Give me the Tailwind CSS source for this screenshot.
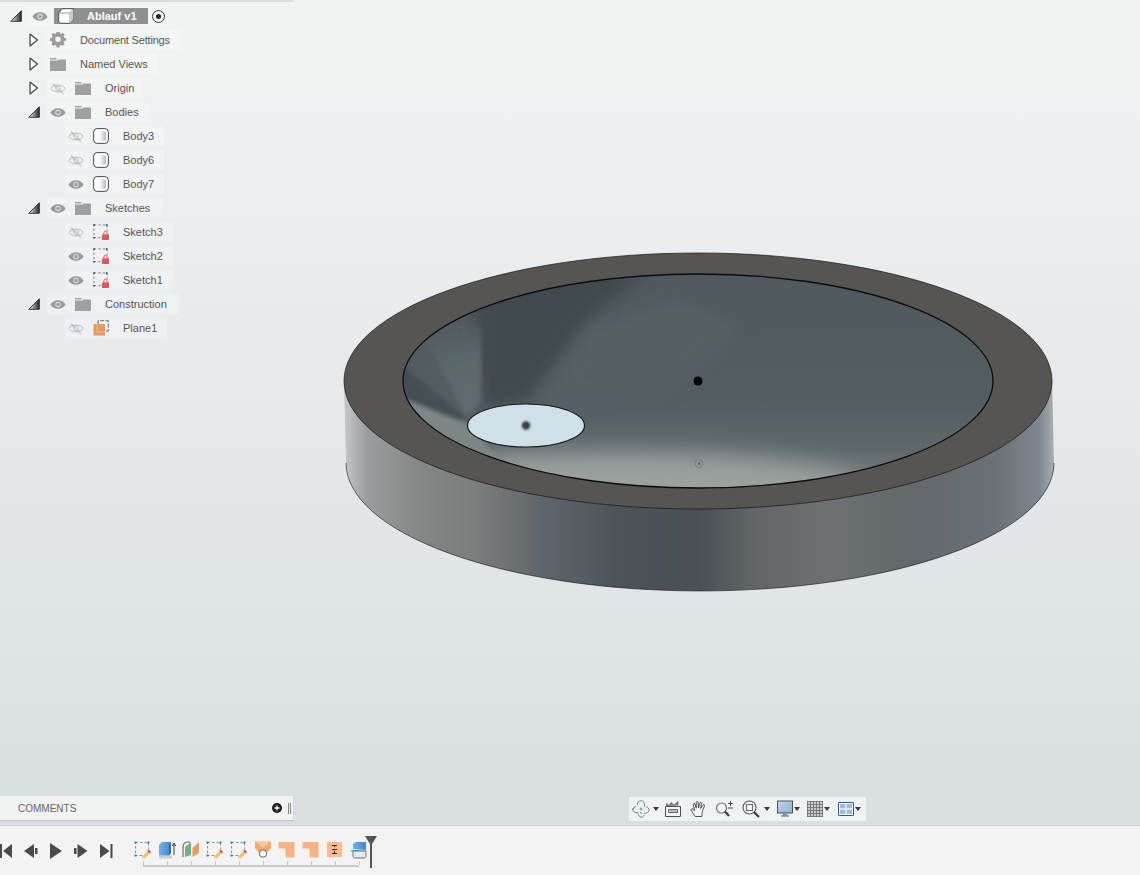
<!DOCTYPE html>
<html lang="de">
<head>
<meta charset="utf-8">
<title>Ablauf v1</title>
<script src="https://cdn.jsdelivr.net/npm/@tailwindcss/browser@4"></script>
</head>
<body class="overflow-hidden">
<svg class="absolute w-0 h-0" aria-hidden="true">
  <defs>
    <linearGradient id="tri" x1="0" y1="0" x2="1" y2="0"><stop offset="0" stop-color="#fff"/><stop offset="1" stop-color="#222"/></linearGradient>
    <linearGradient id="cyl" x1="0" y1="0" x2="1" y2="0"><stop offset="0" stop-color="#fff"/><stop offset=".45" stop-color="#f4f5f5"/><stop offset="1" stop-color="#b9bdc0"/></linearGradient>
    <linearGradient id="blue" x1="0" y1="0" x2="1" y2="0"><stop offset="0" stop-color="#6fb2e6"/><stop offset="1" stop-color="#3f87c9"/></linearGradient>
    <linearGradient id="screen" x1="0" y1="0" x2="1" y2="1"><stop offset="0" stop-color="#c3d6ea"/><stop offset="1" stop-color="#8fb0d4"/></linearGradient>
    <symbol id="eye" viewBox="0 0 18 12"><path d="M.5 6C4 -.5 14 -.5 17.500 6C14 12.500 4 12.500 .5 6Z" fill="#9b9b9b"/><circle cx="9" cy="6" r="3.100" fill="#dcdedf"/><circle cx="9" cy="6" r="1.900" fill="#9b9b9b"/></symbol>
    <symbol id="eyeoff" viewBox="0 0 18 14"><path d="M.8 7C4 1.800 14 1.800 17.200 7C14 12.200 4 12.200 .8 7Z" fill="none" stroke="#b0b0b0" stroke-width=".9"/><circle cx="9" cy="7" r="2.800" fill="none" stroke="#bbb" stroke-width=".9"/><path d="M3.500 1L15.500 12.500M2.500 2L14.500 13.500" stroke="#acacac" stroke-width=".8"/></symbol>
    <symbol id="folder" viewBox="0 0 16 13"><path d="M0 0H6.500V1.500H0Z" fill="#a5a5a5"/><path d="M0 2.500H7.500L8.500 1.500H16V13H0Z" fill="#a0a0a0"/></symbol>
    <symbol id="open" viewBox="0 0 12 12"><path d="M.8 11.300L11.300 .8V11.300Z" fill="url(#tri)" stroke="#333" stroke-width="1"/></symbol>
    <symbol id="shut" viewBox="0 0 10 14"><path d="M1 1L8.500 7L1 13Z" fill="#fafafa" stroke="#444" stroke-width="1.200" stroke-linejoin="round"/></symbol>
    <symbol id="body" viewBox="0 0 16 16"><rect x=".6" y=".6" width="14.800" height="14.800" rx="3.500" fill="#fff" stroke="#3e4a5b" stroke-width="1"/><path d="M3 4C5 2.500 11 2.500 13 4V12C11 13.500 5 13.500 3 12Z" fill="url(#cyl)"/></symbol>
    <symbol id="sketchlock" viewBox="0 0 17 17"><path d="M1 1H15V8M8 14.500H1V1" fill="none" stroke="#555" stroke-width=".8" stroke-dasharray="2.500 2.200"/><path d="M.3 .3h1.700v1.700h-1.700zM13.700 .3h1.700v1.700h-1.700zM.3 13.700h1.700v1.700h-1.700z" fill="#3a4a5c"/><rect x="9.500" y="11" width="7.500" height="6" fill="#de5660"/><path d="M11.500 11V9.500a1.700 1.700 0 0 1 3.500 0V11" fill="none" stroke="#de5660" stroke-width="1"/></symbol>
    <symbol id="pencilsketch" viewBox="0 0 18 18"><path d="M1.500 1.500H14.500V8M8 14.500H1.500V1.500" fill="none" stroke="#6b7a88" stroke-width=".8" stroke-dasharray="2.500 2"/><path d="M.5 .5h2v2h-2zM13.500 .5h2v2h-2zM.5 13.500h2v2h-2z" fill="#2f7cc4"/><path d="M8.500 15L14.500 8.500L17 11L11 17.200L8 17.500Z" fill="#f4c07a"/><path d="M14.500 8.500L17 11L15.800 12.300L13.300 9.800Z" fill="#d9434f"/></symbol>
    <symbol id="fillet" viewBox="0 0 18 18"><path d="M.5 1H16.500V16.500H9.500C8 16.500 7.500 15.500 7.500 14V9C7.500 8 7 7.500 6 7.500H.5Z" fill="#f9b382"/></symbol>
    <symbol id="caret" viewBox="0 0 6 4"><path d="M0 0H6L3 4Z" fill="#3a3a3a"/></symbol>
  </defs>
</svg>

<div class="relative w-[1140px] h-[875px] flex flex-col font-['Liberation_Sans',Arial,sans-serif] text-[#555]">
  <!-- Canvas -->
  <main class="relative flex-1 bg-linear-to-b from-[#f1f3f3] via-[#e6e9eb] to-[#d9dfe0]">
    <svg class="absolute top-0 left-0" width="1140" height="826" viewBox="0 0 1140 826" aria-label="3D-Modell">
      <defs>
        <linearGradient id="side" gradientUnits="userSpaceOnUse" x1="345" y1="0" x2="1054" y2="0">
          <stop offset="0" stop-color="#c2c7c7"/>
          <stop offset=".03" stop-color="#9b9e9e"/>
          <stop offset=".1" stop-color="#868888"/>
          <stop offset=".19" stop-color="#7a7c7c"/>
          <stop offset=".28" stop-color="#5e656a"/>
          <stop offset=".39" stop-color="#4b5359"/>
          <stop offset=".5" stop-color="#4a5053"/>
          <stop offset=".58" stop-color="#626669"/>
          <stop offset=".68" stop-color="#6d7173"/>
          <stop offset=".8" stop-color="#62676a"/>
          <stop offset=".92" stop-color="#6a7277"/>
          <stop offset=".98" stop-color="#7f888e"/>
          <stop offset="1" stop-color="#a9afb2"/>
        </linearGradient>
        <linearGradient id="bowl" gradientUnits="userSpaceOnUse" x1="0" y1="274" x2="0" y2="488">
          <stop offset="0" stop-color="#4f5a5e"/>
          <stop offset=".6" stop-color="#525e62"/>
          <stop offset=".82" stop-color="#5f696b"/>
          <stop offset="1" stop-color="#7a8382"/>
        </linearGradient>
        <linearGradient id="wedge" gradientUnits="userSpaceOnUse" x1="440" y1="330" x2="465" y2="400">
          <stop offset="0" stop-color="#5b676b" stop-opacity="0"/>
          <stop offset=".45" stop-color="#5a666a"/>
          <stop offset="1" stop-color="#5f6b6e"/>
        </linearGradient>
        <clipPath id="bowlclip"><ellipse cx="698" cy="381" rx="295" ry="107"/></clipPath>
        <filter id="b2" x="-30%" y="-30%" width="160%" height="160%"><feGaussianBlur stdDeviation="2.200"/></filter>
        <filter id="b6" x="-30%" y="-30%" width="160%" height="160%"><feGaussianBlur stdDeviation="8"/></filter>
        <filter id="b16" x="-30%" y="-60%" width="160%" height="220%"><feGaussianBlur stdDeviation="12"/></filter>
        <filter id="b1" x="-50%" y="-50%" width="200%" height="200%"><feGaussianBlur stdDeviation=".8"/></filter>
      </defs>
      <path d="M344 381L346 463A354 128 0 0 0 1054 463L1052 381Z" fill="url(#side)"/>
      <path d="M346 463A354 128 0 0 0 1054 463" fill="none" stroke="#111" stroke-width=".6"/>
      <ellipse cx="698" cy="381" rx="354" ry="128" fill="#565553" stroke="#151515" stroke-width=".7"/>
      <ellipse cx="698" cy="381" rx="295" ry="107" fill="url(#bowl)"/>
      <g clip-path="url(#bowlclip)">
        <ellipse cx="620" cy="486" rx="240" ry="34" fill="#9aa19e" filter="url(#b16)"/>
        <path d="M585 322L650 268H470L482 408L525 402Z" fill="#3f494d" filter="url(#b6)"/>
        <path d="M590 330L680 300L740 330L670 390L540 405Z" fill="#566063" filter="url(#b6)"/>
        <path d="M466 415L420 330L481 320L481 402Z" fill="url(#wedge)" filter="url(#b2)"/>
        <path d="M466 418L398 362V395L445 428Z" fill="#454f53" filter="url(#b2)"/>
        <path d="M470 425L403 398L405 445L505 470Z" fill="#7c8888" filter="url(#b2)"/>
      </g>
      <ellipse cx="698" cy="381" rx="295" ry="107" fill="none" stroke="#0c0c0c" stroke-width="1.300"/>
      <ellipse cx="526" cy="425.500" rx="58.500" ry="21.500" fill="#cfe0e9" stroke="#15191b" stroke-width="1.200"/>
      <circle cx="526" cy="425.500" r="4.200" fill="#3a3a3a" filter="url(#b1)"/>
      <circle cx="698" cy="381" r="4.500" fill="#050505"/>
      <circle cx="699" cy="463.500" r="4" fill="none" stroke="#70728e" stroke-width=".8"/>
      <circle cx="699" cy="463.500" r="1.200" fill="#5d5f7c"/>
    </svg>

    <!-- Browser tree -->
    <nav class="absolute top-0 left-0 w-[293px] border-t-2 border-[#d9dcdd] pt-[2px] text-[11px]">
      <div class="flex items-center h-6 pl-[10px]">
        <svg class="w-3 h-3" ><use href="#open"/></svg>
        <div class="flex items-center h-5 ml-[7px] pr-[3px] bg-white/25">
          <span class="w-[22px] flex justify-center"><svg class="w-4 h-[11px]"><use href="#eye"/></svg></span>
          <span class="flex items-center w-[94px] h-4 ml-[3px] bg-[#8f8f8f] pl-[4px]">
            <svg class="w-4 h-4" viewBox="0 0 16 16"><path d="M.7 5L4 .7H15.300V11L12 15.300H3A2.300 2.300 0 0 1 .7 13Z" fill="#fff" stroke="#444" stroke-width=".9"/><path d="M.7 5H12V15.300M12 5L15.300 .7" fill="none" stroke="#777" stroke-width=".7"/><path d="M12 5L15.300 .7V11L12 15.300Z" fill="#c9cbcd"/></svg>
            <span class="ml-[13px] font-bold text-white">Ablauf v1</span>
          </span>
          <span class="ml-[4px] w-[13px] h-[13px] rounded-full border border-[#333] flex items-center justify-center"><span class="w-[5px] h-[5px] rounded-full bg-[#222]"></span></span>
        </div>
      </div>

      <div class="flex items-center h-6 pl-[29px]">
        <svg class="w-[10px] h-[14px]"><use href="#shut"/></svg>
        <div class="flex items-center h-5 ml-[8px] pr-[10px] bg-white/25">
          <span class="w-[22px] flex justify-center"><svg class="w-4 h-4" viewBox="0 0 16 16"><path fill="#9b9b9b" fill-rule="evenodd" d="M6.500 0h3l.4 2.100 1.300.6L13 1.500l2.100 2.100-1.200 1.800.6 1.300 2.100.4v3l-2.100.4-.6 1.300 1.200 1.800-2.100 2.100-1.800-1.200-1.300.6-.4 2.100h-3l-.4-2.100-1.300-.6L3 15.800.9 13.700l1.200-1.800-.6-1.300L-.6 10.200v-3l2.100-.4.6-1.300L.9 3.600 3 1.500l1.800 1.200 1.300-.6ZM8 5.400a3 3 0 1 0 0 6 3 3 0 0 0 0-6Z" transform="translate(.6 -.6) scale(.93)"/></svg></span>
          <span class="ml-[11px] tracking-[-0.18px]">Document Settings</span>
        </div>
      </div>

      <div class="flex items-center h-6 pl-[29px]">
        <svg class="w-[10px] h-[14px]"><use href="#shut"/></svg>
        <div class="flex items-center h-5 ml-[8px] pr-[9px] bg-white/25">
          <span class="w-[22px] flex justify-center"><svg class="w-4 h-[13px]"><use href="#folder"/></svg></span>
          <span class="ml-[11px]">Named Views</span>
        </div>
      </div>

      <div class="flex items-center h-6 pl-[29px]">
        <svg class="w-[10px] h-[14px]"><use href="#shut"/></svg>
        <div class="flex items-center h-5 ml-[8px] pr-[9px] bg-white/25">
          <span class="w-[22px] flex justify-center"><svg class="w-4 h-[13px]"><use href="#eyeoff"/></svg></span>
          <span class="w-[28px] flex justify-center"><svg class="w-4 h-[13px]"><use href="#folder"/></svg></span>
          <span class="ml-[8px]">Origin</span>
        </div>
      </div>

      <div class="flex items-center h-6 pl-[28px]">
        <svg class="w-3 h-3"><use href="#open"/></svg>
        <div class="flex items-center h-5 ml-[7px] pr-[11px] bg-white/25">
          <span class="w-[22px] flex justify-center"><svg class="w-4 h-[11px]"><use href="#eye"/></svg></span>
          <span class="w-[28px] flex justify-center"><svg class="w-4 h-[13px]"><use href="#folder"/></svg></span>
          <span class="ml-[8px]">Bodies</span>
        </div>
      </div>

      <div class="flex items-center h-6 pl-[65px]">
        <div class="flex items-center h-5 pr-[10px] bg-white/25">
          <span class="w-[22px] flex justify-center"><svg class="w-4 h-[13px]"><use href="#eyeoff"/></svg></span>
          <span class="w-[28px] flex justify-center"><svg class="w-4 h-4"><use href="#body"/></svg></span>
          <span class="ml-[8px]">Body3</span>
        </div>
      </div>
      <div class="flex items-center h-6 pl-[65px]">
        <div class="flex items-center h-5 pr-[10px] bg-white/25">
          <span class="w-[22px] flex justify-center"><svg class="w-4 h-[13px]"><use href="#eyeoff"/></svg></span>
          <span class="w-[28px] flex justify-center"><svg class="w-4 h-4"><use href="#body"/></svg></span>
          <span class="ml-[8px]">Body6</span>
        </div>
      </div>
      <div class="flex items-center h-6 pl-[65px]">
        <div class="flex items-center h-5 pr-[10px] bg-white/25">
          <span class="w-[22px] flex justify-center"><svg class="w-4 h-[11px]"><use href="#eye"/></svg></span>
          <span class="w-[28px] flex justify-center"><svg class="w-4 h-4"><use href="#body"/></svg></span>
          <span class="ml-[8px]">Body7</span>
        </div>
      </div>

      <div class="flex items-center h-6 pl-[28px]">
        <svg class="w-3 h-3"><use href="#open"/></svg>
        <div class="flex items-center h-5 ml-[7px] pr-[12px] bg-white/25">
          <span class="w-[22px] flex justify-center"><svg class="w-4 h-[11px]"><use href="#eye"/></svg></span>
          <span class="w-[28px] flex justify-center"><svg class="w-4 h-[13px]"><use href="#folder"/></svg></span>
          <span class="ml-[8px]">Sketches</span>
        </div>
      </div>

      <div class="flex items-center h-6 pl-[65px]">
        <div class="flex items-center h-5 pr-[10px] bg-white/25">
          <span class="w-[22px] flex justify-center"><svg class="w-4 h-[13px]"><use href="#eyeoff"/></svg></span>
          <span class="w-[28px] flex justify-center"><svg class="w-4 h-4"><use href="#sketchlock"/></svg></span>
          <span class="ml-[8px]">Sketch3</span>
        </div>
      </div>
      <div class="flex items-center h-6 pl-[65px]">
        <div class="flex items-center h-5 pr-[10px] bg-white/25">
          <span class="w-[22px] flex justify-center"><svg class="w-4 h-[11px]"><use href="#eye"/></svg></span>
          <span class="w-[28px] flex justify-center"><svg class="w-4 h-4"><use href="#sketchlock"/></svg></span>
          <span class="ml-[8px]">Sketch2</span>
        </div>
      </div>
      <div class="flex items-center h-6 pl-[65px]">
        <div class="flex items-center h-5 pr-[10px] bg-white/25">
          <span class="w-[22px] flex justify-center"><svg class="w-4 h-[11px]"><use href="#eye"/></svg></span>
          <span class="w-[28px] flex justify-center"><svg class="w-4 h-4"><use href="#sketchlock"/></svg></span>
          <span class="ml-[8px]">Sketch1</span>
        </div>
      </div>

      <div class="flex items-center h-6 pl-[28px]">
        <svg class="w-3 h-3"><use href="#open"/></svg>
        <div class="flex items-center h-5 ml-[7px] pr-[12px] bg-white/25">
          <span class="w-[22px] flex justify-center"><svg class="w-4 h-[11px]"><use href="#eye"/></svg></span>
          <span class="w-[28px] flex justify-center"><svg class="w-4 h-[13px]"><use href="#folder"/></svg></span>
          <span class="ml-[8px]">Construction</span>
        </div>
      </div>
      <div class="flex items-center h-6 pl-[65px]">
        <div class="flex items-center h-5 pr-[10px] bg-white/25">
          <span class="w-[22px] flex justify-center"><svg class="w-4 h-[13px]"><use href="#eyeoff"/></svg></span>
          <span class="w-[28px] flex justify-center"><svg class="w-4 h-4" viewBox="0 0 16 16"><path d="M5 4V.7H15.300V11H13" fill="none" stroke="#444" stroke-width=".8" stroke-dasharray="4 1.500"/><rect x=".5" y="4" width="11.500" height="11.500" fill="#e79a5f"/><path d="M4 4V12H12" fill="none" stroke="#f4c9a3" stroke-width=".7"/></svg></span>
          <span class="ml-[8px]">Plane1</span>
        </div>
      </div>
    </nav>

    <!-- Comments panel -->
    <section class="absolute left-0 top-[796px] w-[293px] h-6 flex items-center pl-[18px] bg-[#f1f2f2] shadow-[0_1px_1px_rgba(0,0,0,.12)]">
      <span class="text-[10px] text-[#666]">COMMENTS</span>
      <svg class="ml-auto w-[10px] h-[10px]" viewBox="0 0 10 10"><circle cx="5" cy="5" r="5" fill="#1d1d1d"/><path d="M5 2.500V7.500M2.500 5H7.500" stroke="#fff" stroke-width="1.300"/></svg>
      <span class="ml-[6px] mr-[2px] w-[3px] h-[11px] border-x border-[#8d8d8d] bg-[#e5e5e5]"></span>
    </section>

    <!-- Navigation bar -->
    <div class="absolute left-[629px] top-[797px] w-[237px] h-6 flex items-center bg-[#eff2f3]">
      <svg class="ml-[3px] w-[18px] h-[18px]" viewBox="0 0 18 18" fill="none" stroke="#5b6065" stroke-width=".8"><path d="M5.500 5C5 2 7 .8 9 .8C11.500 .8 13 3 12.500 6.500M4 6.500C1.800 7.200 .8 8.500 .8 9.700C.8 11.500 3 12.500 5.500 12.500M14 6.500C16 7.200 17.200 8.700 17 10.300C16.700 12.300 14.500 13.500 12 13.300"/><path d="M5.500 12.500C6 15 7.500 17.200 9.500 17.200C11 17.200 11.800 16 12 14.800"/><path d="M7.500 9H10.500M9 7.500V10.500" stroke="#3e7fbe"/><path d="M.5 9.500L2 7.500M8 12L9.500 14" stroke="#444"/></svg>
      <svg class="ml-[3px] w-[6px] h-1"><use href="#caret"/></svg>
      <svg class="ml-[5px] w-[18px] h-[18px]" viewBox="0 0 18 18" fill="none" stroke="#4a4f53"><path d="M1.500 6.500H16.500V16.500H1.500Z" fill="#f3f4f4"/><path d="M4.500 9.500H13.500V12.500H4.500Z" fill="#b9bec2" stroke-width=".8"/><path d="M2.500 6V3.500L5 5.500L7 2.500L10 5L14 1.500V5.500" fill="#7c8186" stroke="#4a4f53" stroke-width=".6"/></svg>
      <svg class="ml-[8px] w-[18px] h-[18px]" viewBox="0 0 18 18" fill="#f6f6f6" stroke="#3f4346" stroke-width=".9" stroke-linejoin="round"><path d="M5.200 16.500C3.500 14.300 2.600 12.500 1.200 10.200C.6 9 2 8.200 3 9.200L4.600 11L3.300 4.500C3.100 3.200 4.800 3 5.100 4.200L6.200 8.200L6.300 2.500C6.300 1.100 8.100 1.100 8.200 2.500L8.500 8L9.800 3C10.100 1.800 11.700 2.200 11.500 3.400L10.600 8.500L12.900 5C13.700 4 15 4.800 14.500 5.900L12.500 10.500C12 12.500 12.300 14.500 11.800 16.500Z"/></svg>
      <svg class="ml-[7px] w-[19px] h-[18px]" viewBox="0 0 19 18" fill="none"><circle cx="6.500" cy="8" r="5" fill="#f5f6f6" stroke="#666" stroke-width="1.100"/><path d="M10 11.500L14 16" stroke="#3b3b3b" stroke-width="2.200"/><path d="M15.500 1V6M13 3.500H18M13 8H18" stroke="#444"/></svg>
      <svg class="ml-[8px] w-[18px] h-[18px]" viewBox="0 0 18 18" fill="none"><circle cx="7.500" cy="7.500" r="6.500" fill="#f5f6f6" stroke="#555" stroke-width="1.100"/><rect x="4.500" y="4.500" width="6" height="6" stroke="#666"/><path d="M12 12L17 17" stroke="#3b3b3b" stroke-width="2.200"/></svg>
      <svg class="ml-1 w-[6px] h-1"><use href="#caret"/></svg>
      <svg class="ml-[7px] w-4 h-[18px]" viewBox="0 0 16 18"><rect x=".5" y="1" width="15" height="12" fill="url(#screen)" stroke="#4a535c"/><path d="M6 13H10L10.500 15.500H5.500Z" fill="#8b9095"/><path d="M4 16H12" stroke="#6c7378" stroke-width="1.200"/></svg>
      <svg class="ml-px w-[6px] h-1"><use href="#caret"/></svg>
      <svg class="ml-[7px] w-4 h-4" viewBox="0 0 16 16"><rect width="16" height="16" fill="#c6c8ca"/><path d="M0 .5H16M0 3.500H16M0 6.500H16M0 9.500H16M0 12.500H16M0 15.500H16M.5 0V16M3.500 0V16M6.500 0V16M9.500 0V16M12.500 0V16M15.500 0V16" stroke="#5f6367" stroke-width=".7"/></svg>
      <svg class="ml-px w-[6px] h-1"><use href="#caret"/></svg>
      <svg class="ml-2 w-4 h-[14px]" viewBox="0 0 16 14"><rect x=".5" y=".5" width="15" height="13" rx=".5" fill="#f2f5f7" stroke="#3a5878"/><path d="M2 2H7.300V6.300H2ZM8.700 2H14V6.300H8.700ZM2 7.700H7.300V12H2ZM8.700 7.700H14V12H8.700Z" fill="#9dbde0"/></svg>
      <svg class="ml-px w-[6px] h-1"><use href="#caret"/></svg>
    </div>
  </main>

  <!-- Timeline -->
  <footer class="relative h-[50px] shrink-0 flex items-start border-t border-[#cfd3d4] bg-[#f3f3f3]">
    <div class="flex items-center gap-3 mt-[17px]">
      <svg class="w-3 h-4" viewBox="0 0 12 16" fill="#4a4a4a"><rect y="1" width="2" height="14"/><path d="M12 1V15L3 8Z"/></svg>
      <svg class="w-[14px] h-4" viewBox="0 0 14 16" fill="#4a4a4a"><path d="M10 1V15L0 8Z"/><rect x="11" y="5" width="2.500" height="6"/></svg>
      <svg class="w-3 h-4" viewBox="0 0 12 16" fill="#4a4a4a"><path d="M0 0V16L12 8Z"/></svg>
      <svg class="w-[14px] h-4" viewBox="0 0 14 16" fill="#4a4a4a"><rect y="5" width="2.500" height="6"/><path d="M3.500 1V15L13.500 8Z"/></svg>
      <svg class="w-[13px] h-4" viewBox="0 0 13 16" fill="#4a4a4a"><path d="M0 1V15L9.500 8Z"/><rect x="10.500" y="1" width="2" height="14"/></svg>
    </div>
    <div class="ml-[18px] mt-[15px] w-[240px] flex flex-col">
      <div class="flex">
        <div class="w-6 flex flex-col items-center"><svg class="w-[18px] h-[18px]"><use href="#pencilsketch"/></svg><span class="mt-[2px] w-px h-1 bg-[#c6c6c6]"></span></div>
        <div class="w-6 flex flex-col items-center"><svg class="w-[18px] h-[18px]" viewBox="0 0 18 18"><path d="M1 14.500H14V17.500H1Z" fill="#c9cbcd"/><path d="M1 4L4 1H13V12L11 14.500H1Z" fill="url(#blue)"/><path d="M11 4L13 1V12L11 14.500Z" fill="#2e6da8"/><path d="M16 14V3M14.300 5L16 2L17.700 5" fill="none" stroke="#3a3a3a"/></svg><span class="mt-[2px] w-px h-1 bg-[#c6c6c6]"></span></div>
        <div class="w-6 flex flex-col items-center"><svg class="w-[18px] h-[18px]" viewBox="0 0 18 18"><path d="M1 16V6C1 3 3 1 5 1H8" fill="none" stroke="#666" stroke-width="1.100"/><path d="M3 16V6L9 1V14Z" fill="#6fb57f"/><path d="M10.500 16V7L17 1V12Z" fill="#ea9c62"/></svg><span class="mt-[2px] w-px h-1 bg-[#c6c6c6]"></span></div>
        <div class="w-6 flex flex-col items-center"><svg class="w-[18px] h-[18px]"><use href="#pencilsketch"/></svg><span class="mt-[2px] w-px h-1 bg-[#c6c6c6]"></span></div>
        <div class="w-6 flex flex-col items-center"><svg class="w-[18px] h-[18px]"><use href="#pencilsketch"/></svg><span class="mt-[2px] w-px h-1 bg-[#c6c6c6]"></span></div>
        <div class="w-6 flex flex-col items-center"><svg class="w-[18px] h-[18px]" viewBox="0 0 18 18"><path d="M1 .5H17V7L12 13H6L1 7Z" fill="#f4a870"/><path d="M2 .5L9 7L16 .5Z" fill="#f9c8a2"/><circle cx="9" cy="12.500" r="3.700" fill="#fff" stroke="#5a5f63"/></svg><span class="mt-[2px] w-px h-1 bg-[#c6c6c6]"></span></div>
        <div class="w-6 flex flex-col items-center"><svg class="w-[18px] h-[18px]"><use href="#fillet"/></svg><span class="mt-[2px] w-px h-1 bg-[#c6c6c6]"></span></div>
        <div class="w-6 flex flex-col items-center"><svg class="w-[18px] h-[18px]"><use href="#fillet"/></svg><span class="mt-[2px] w-px h-1 bg-[#c6c6c6]"></span></div>
        <div class="w-6 flex flex-col items-center"><svg class="w-[18px] h-[18px]" viewBox="0 0 18 18"><rect x="1" y="1" width="15" height="15" fill="#f9bd93"/><path d="M6 4.500H11M8.500 4.500V6M6 8.500H11M8.500 10V12M6 12.500H11" stroke="#2a2a2a" stroke-width="1"/></svg><span class="mt-[2px] w-px h-1 bg-[#c6c6c6]"></span></div>
        <div class="w-6 flex flex-col items-center"><svg class="w-[18px] h-[18px]" viewBox="0 0 18 18"><path d="M3 10H16V15.500C16 16.500 15 17 14 17H5C4 17 3 16.500 3 15.500Z" fill="#e8e8e8" stroke="#666" stroke-width=".9"/><path d="M3 3L6 1H16V8H3Z" fill="url(#blue)"/><path d="M.5 10L16 8.500" stroke="#3f87c9" stroke-width="1.100"/></svg><span class="mt-[2px] w-px h-1 bg-[#c6c6c6]"></span></div>
      </div>
      <div class="w-[216px] ml-[12px] h-[2px] bg-[#c8c8c8]"></div>
    </div>
    <svg class="absolute left-[365px] top-[10px] w-3 h-8" viewBox="0 0 12 32"><path d="M0 0H12L7 8V32H5V8Z" fill="#555"/></svg>
  </footer>
</div>
</body>
</html>
